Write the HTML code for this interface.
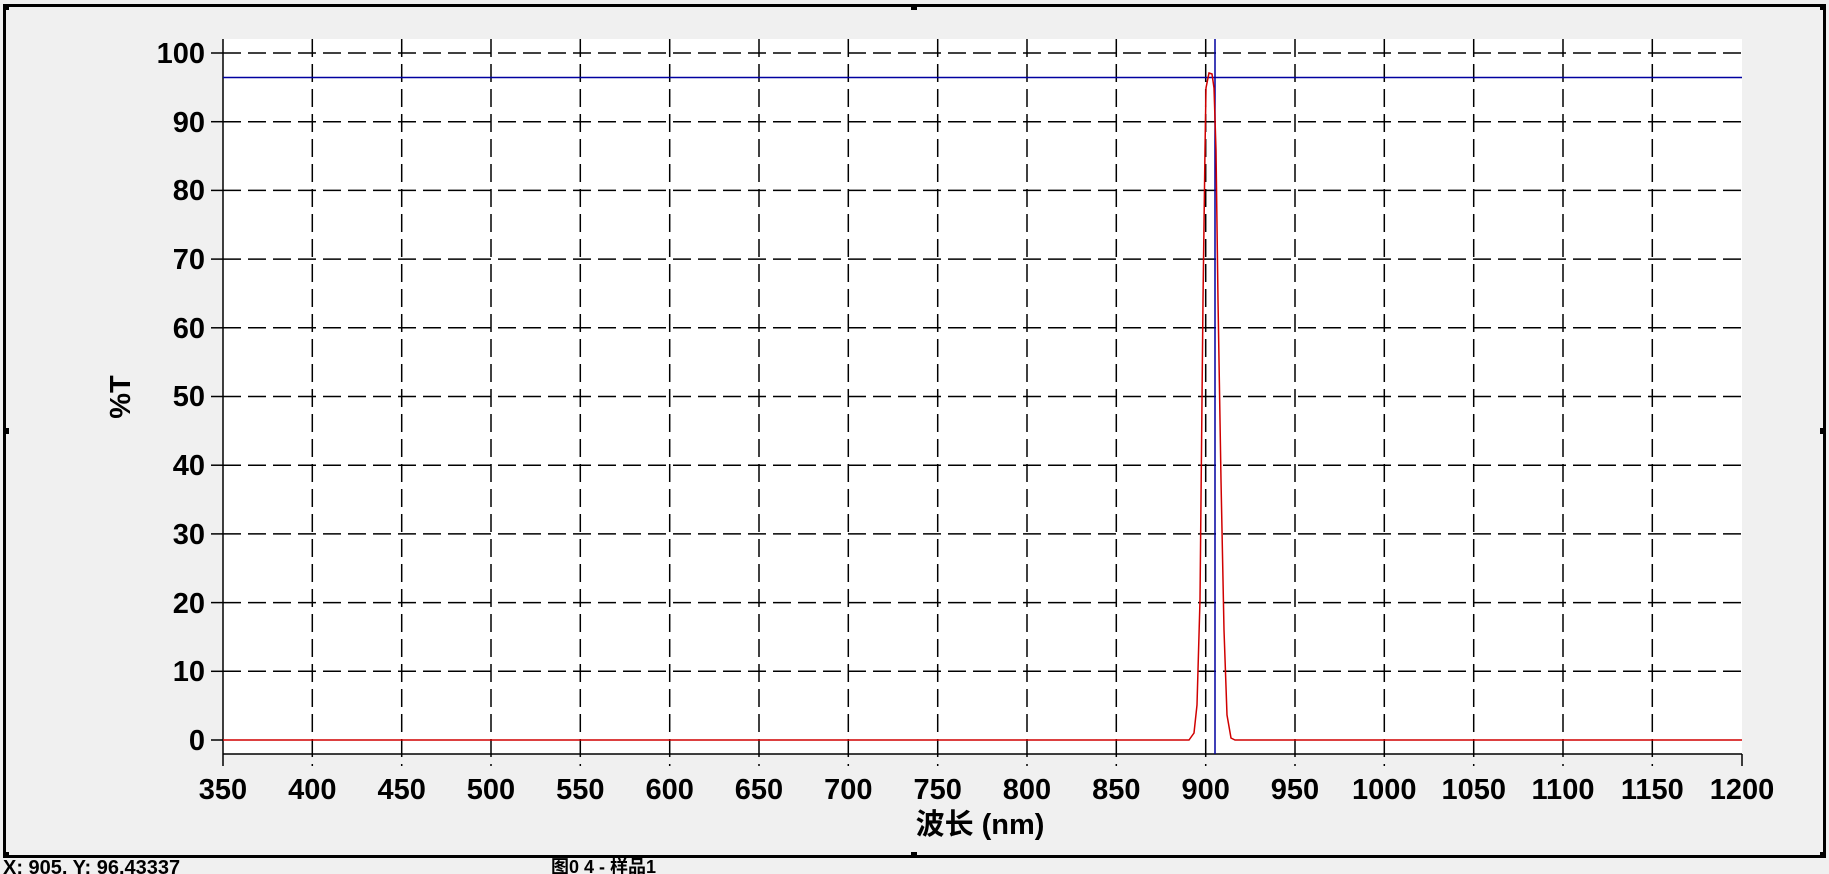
<!DOCTYPE html>
<html><head><meta charset="utf-8"><style>
html,body{margin:0;padding:0;background:#f0f0f0;width:1829px;height:874px;overflow:hidden}
svg text{font-family:"Liberation Sans","Noto Sans CJK SC",sans-serif;font-weight:bold;fill:#000}
</style></head><body>
<svg width="1829" height="874" viewBox="0 0 1829 874" xmlns="http://www.w3.org/2000/svg">
<rect x="0" y="0" width="1829" height="874" fill="#f0f0f0"/>
<rect x="4.5" y="5.5" width="1820" height="851" fill="none" stroke="#000" stroke-width="3"/>
<rect x="3" y="4" width="6" height="6" fill="#000"/>
<rect x="911" y="4" width="6" height="6" fill="#000"/>
<rect x="1820" y="4" width="6" height="6" fill="#000"/>
<rect x="3" y="428" width="6" height="6" fill="#000"/>
<rect x="1820" y="428" width="6" height="6" fill="#000"/>
<rect x="3" y="852" width="6" height="6" fill="#000"/>
<rect x="911" y="852" width="6" height="6" fill="#000"/>
<rect x="1820" y="852" width="6" height="6" fill="#000"/>
<rect x="223" y="39" width="1519" height="715" fill="#fff"/>
<g stroke="#000" stroke-width="1.5" stroke-dasharray="18,7" id="grid">
<script>/*noop*/</script>
</g>
<g stroke="#000" stroke-width="1.5">
<line x1="223" y1="39" x2="223" y2="766"/>
<line x1="223" y1="754" x2="1742" y2="754"/>
<line x1="1742" y1="754" x2="1742" y2="766"/>
<line x1="211" y1="53" x2="223" y2="53"/>
<line x1="211" y1="121.7" x2="223" y2="121.7"/>
<line x1="211" y1="190.4" x2="223" y2="190.4"/>
<line x1="211" y1="259.1" x2="223" y2="259.1"/>
<line x1="211" y1="327.8" x2="223" y2="327.8"/>
<line x1="211" y1="396.5" x2="223" y2="396.5"/>
<line x1="211" y1="465.2" x2="223" y2="465.2"/>
<line x1="211" y1="533.9" x2="223" y2="533.9"/>
<line x1="211" y1="602.6" x2="223" y2="602.6"/>
<line x1="211" y1="671.3" x2="223" y2="671.3"/>
<line x1="211" y1="740" x2="223" y2="740"/>
</g>
<g stroke="#000" stroke-width="1.5" stroke-dasharray="18,7">
<line x1="223" y1="53" x2="1742" y2="53"/>
<line x1="223" y1="121.7" x2="1742" y2="121.7"/>
<line x1="223" y1="190.4" x2="1742" y2="190.4"/>
<line x1="223" y1="259.1" x2="1742" y2="259.1"/>
<line x1="223" y1="327.8" x2="1742" y2="327.8"/>
<line x1="223" y1="396.5" x2="1742" y2="396.5"/>
<line x1="223" y1="465.2" x2="1742" y2="465.2"/>
<line x1="223" y1="533.9" x2="1742" y2="533.9"/>
<line x1="223" y1="602.6" x2="1742" y2="602.6"/>
<line x1="223" y1="671.3" x2="1742" y2="671.3"/>
<line x1="312.3" y1="39" x2="312.3" y2="766"/>
<line x1="401.7" y1="39" x2="401.7" y2="766"/>
<line x1="491" y1="39" x2="491" y2="766"/>
<line x1="580.3" y1="39" x2="580.3" y2="766"/>
<line x1="669.7" y1="39" x2="669.7" y2="766"/>
<line x1="759" y1="39" x2="759" y2="766"/>
<line x1="848.3" y1="39" x2="848.3" y2="766"/>
<line x1="937.7" y1="39" x2="937.7" y2="766"/>
<line x1="1027" y1="39" x2="1027" y2="766"/>
<line x1="1116.3" y1="39" x2="1116.3" y2="766"/>
<line x1="1205.7" y1="39" x2="1205.7" y2="766"/>
<line x1="1295" y1="39" x2="1295" y2="766"/>
<line x1="1384.3" y1="39" x2="1384.3" y2="766"/>
<line x1="1473.7" y1="39" x2="1473.7" y2="766"/>
<line x1="1563" y1="39" x2="1563" y2="766"/>
<line x1="1652.3" y1="39" x2="1652.3" y2="766"/>
</g>
<line x1="223" y1="77.5" x2="1742" y2="77.5" stroke="#0000a0" stroke-width="1.5"/>
<line x1="1215" y1="39" x2="1215" y2="754" stroke="#0000a0" stroke-width="1.5"/>
<path d="M223,740 L1189,740 L1194,733 L1197,705 L1200,600 L1203,300 L1205,150 L1206,88 L1209,73 L1212,74 L1214,88 L1216,150 L1218,300 L1221,480 L1224,630 L1227,715 L1231,738 L1235,740 L1742,740" fill="none" stroke="#d00000" stroke-width="1.5"/>
<g font-size="29" text-anchor="end">
<text x="205" y="63">100</text>
<text x="205" y="132">90</text>
<text x="205" y="200">80</text>
<text x="205" y="269">70</text>
<text x="205" y="338">60</text>
<text x="205" y="406">50</text>
<text x="205" y="475">40</text>
<text x="205" y="544">30</text>
<text x="205" y="613">20</text>
<text x="205" y="681">10</text>
<text x="205" y="750">0</text>
</g>
<g font-size="29" text-anchor="middle">
<text x="223" y="799">350</text>
<text x="312.3" y="799">400</text>
<text x="401.7" y="799">450</text>
<text x="491" y="799">500</text>
<text x="580.3" y="799">550</text>
<text x="669.7" y="799">600</text>
<text x="759" y="799">650</text>
<text x="848.3" y="799">700</text>
<text x="937.7" y="799">750</text>
<text x="1027" y="799">800</text>
<text x="1116.3" y="799">850</text>
<text x="1205.7" y="799">900</text>
<text x="1295" y="799">950</text>
<text x="1384.3" y="799">1000</text>
<text x="1473.7" y="799">1050</text>
<text x="1563" y="799">1100</text>
<text x="1652.3" y="799">1150</text>
<text x="1742" y="799">1200</text>
<text x="980" y="834">波长 (nm)</text>
<text x="0" y="0" transform="translate(130,397) rotate(-90)">%T</text>
</g>
<text x="3" y="874" font-size="20">X: 905, Y: 96.43337</text>
<text x="551" y="873" font-size="18" font-weight="normal">图0 4 - 样品1</text>
</svg>
</body></html>
